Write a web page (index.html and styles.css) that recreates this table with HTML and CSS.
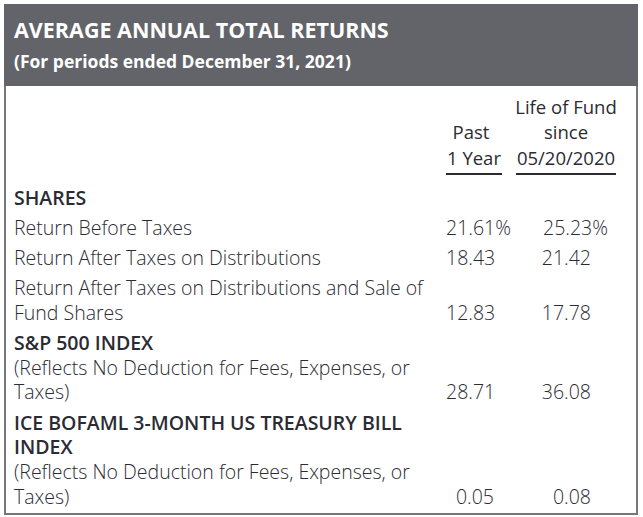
FILE: index.html
```html
<!DOCTYPE html>
<html lang="en">
<head>
<meta charset="utf-8">
<title>Average Annual Total Returns</title>
<link rel="stylesheet" href="styles.css">
</head>
<body>
<div class="box">
  <div class="head">
    <div class="title">AVERAGE ANNUAL TOTAL RETURNS</div>
    <div class="sub">(For periods ended December 31, 2021)</div>
  </div>
  <table class="tbl">
    <colgroup>
      <col class="col-lbl">
      <col class="col-1">
      <col class="col-2">
    </colgroup>
    <thead>
      <tr>
        <th class="lbl"></th>
        <th class="h">Past<br><span class="ul">1 Year</span></th>
        <th class="h">Life of Fund<br>since<br><span class="ul">05/20/2020</span></th>
      </tr>
    </thead>
    <tbody>
      <tr><td class="lbl b">SHARES</td><td></td><td></td></tr>
      <tr><td class="lbl">Return Before Taxes</td><td class="n n1">21.61<span class="pct">%</span></td><td class="n n2">25.23<span class="pct">%</span></td></tr>
      <tr><td class="lbl">Return After Taxes on Distributions</td><td class="n n1">18.43</td><td class="n n2">21.42</td></tr>
      <tr><td class="lbl">Return After Taxes on Distributions and Sale of Fund Shares</td><td class="n n1">12.83</td><td class="n n2">17.78</td></tr>
      <tr><td class="lbl"><span class="b">S&amp;P 500 INDEX</span><br>(Reflects No Deduction for Fees, Expenses, or Taxes)</td><td class="n n1">28.71</td><td class="n n2">36.08</td></tr>
      <tr class="last"><td class="lbl"><span class="b">ICE BOFAML 3-MONTH US TREASURY BILL INDEX</span><br>(Reflects No Deduction for Fees, Expenses, or Taxes)</td><td class="n n1">0.05</td><td class="n n2">0.08</td></tr>
    </tbody>
  </table>
</div>
</body>
</html>
```

FILE: styles.css
```css
html, body {
  margin: 0;
  padding: 0;
  background: #ffffff;
}
body {
  padding: 4px 5px 5px 4px;
  font-family: "Open Sans", "Liberation Sans", sans-serif;
  color: #2b2b33;
}
.box {
  width: 630px;
  border: 2px solid #77777b;
  border-top: none;
  background: #ffffff;
}
.head {
  background: #636469;
  color: #ffffff;
  padding: 9px 8px 10px 8px;
  margin: 0 -2px 0 -2px;
  font-weight: 700;
}
.title {
  font-size: 21.5px;
  line-height: 33px;
  padding-left: 2px;
}
.sub {
  font-size: 17.5px;
  line-height: 30px;
  padding-left: 2px;
}
.tbl {
  border-collapse: collapse;
  table-layout: fixed;
  width: 630px;
  font-size: 19.5px;
  font-weight: 300;
}
.col-lbl { width: 440px; }
.col-1 { width: 50px; }
.col-2 { width: 140px; }
.tbl td, .tbl th {
  padding: 0;
  vertical-align: bottom;
}
.tbl th.h {
  font-weight: 500;
  font-size: 18.5px;
  line-height: 25px;
  padding-top: 8px;
  padding-bottom: 5px;
  text-align: center;
  white-space: nowrap;
}
.ul {
  display: inline-block;
  border-bottom: 2.5px solid #2b2b33;
  line-height: 24px;
  margin-top: 2px;
  padding: 0 1px 3px 1px;
}
.lbl {
  text-align: left;
  padding-left: 8px !important;
  line-height: 24.7px;
  padding-top: 5.5px !important;
}
.b { font-weight: 600; }
.n {
  text-align: right;
  line-height: 24.7px;
  white-space: nowrap;
}
.n1 { padding-right: 2px !important; }
.n2 { padding-right: 45px !important; }
.last td { padding-bottom: 4px !important; }
.pct {
  margin-right: -17px;
}
```
